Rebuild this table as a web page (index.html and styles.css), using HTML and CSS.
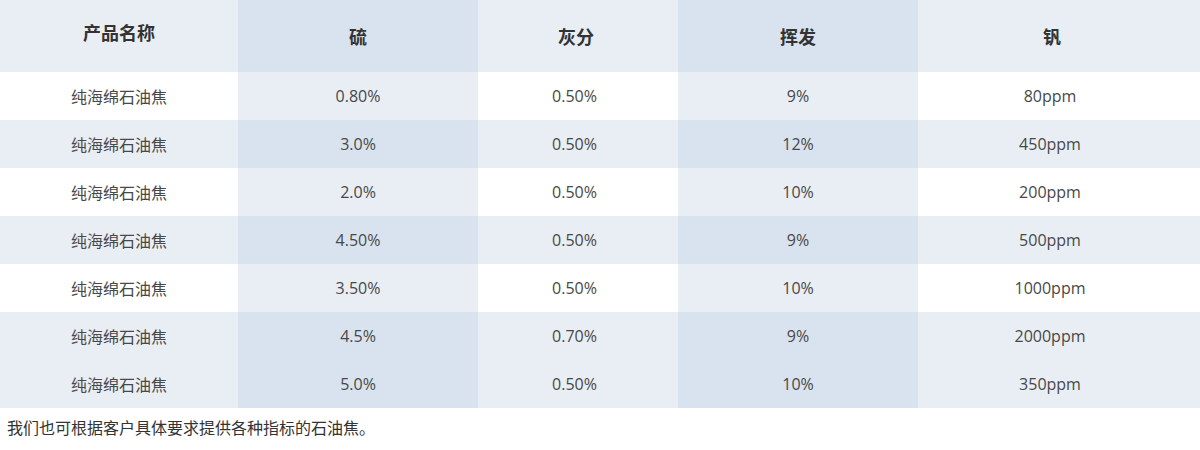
FILE: index.html
```html
<!DOCTYPE html>
<html lang="zh-CN">
<head>
<meta charset="utf-8">
<title>石油焦指标</title>
<link rel="stylesheet" href="styles.css">
</head>
<body>
<table class="spec">
  <colgroup>
    <col class="c1"><col class="c2"><col class="c3"><col class="c4"><col class="c5">
  </colgroup>
  <thead>
    <tr>
      <th class="first">产品名称</th><th>硫</th><th>灰分</th><th>挥发</th><th>钒</th>
    </tr>
  </thead>
  <tbody>
    <tr class="odd"><td>纯海绵石油焦</td><td>0.80%</td><td>0.50%</td><td>9%</td><td>80ppm</td></tr>
    <tr class="even"><td>纯海绵石油焦</td><td>3.0%</td><td>0.50%</td><td>12%</td><td>450ppm</td></tr>
    <tr class="odd"><td>纯海绵石油焦</td><td>2.0%</td><td>0.50%</td><td>10%</td><td>200ppm</td></tr>
    <tr class="even"><td>纯海绵石油焦</td><td>4.50%</td><td>0.50%</td><td>9%</td><td>500ppm</td></tr>
    <tr class="odd"><td>纯海绵石油焦</td><td>3.50%</td><td>0.50%</td><td>10%</td><td>1000ppm</td></tr>
    <tr class="even"><td>纯海绵石油焦</td><td>4.5%</td><td>0.70%</td><td>9%</td><td>2000ppm</td></tr>
    <tr class="even"><td>纯海绵石油焦</td><td>5.0%</td><td>0.50%</td><td>10%</td><td>350ppm</td></tr>
  </tbody>
</table>
<p class="note">我们也可根据客户具体要求提供各种指标的石油焦。</p>
</body>
</html>
```
FILE: styles.css
```css
html, body {
  margin: 0;
  padding: 0;
  background: #ffffff;
  font-family: "Open Sans", "Noto Sans CJK SC", sans-serif;
  color: #444444;
}

.spec {
  width: 1200px;
  border-collapse: collapse;
  table-layout: fixed;
}

.c1 { width: 238px; }
.c2 { width: 240px; }
.c3 { width: 200px; }
.c4 { width: 240px; }
.c5 { width: 282px; }

.spec th {
  height: 72px;
  padding: 0;
  box-sizing: border-box;
  font-size: 18px;
  font-weight: bold;
  color: #333333;
  text-align: center;
  vertical-align: middle;
  background: #e9eef5;
}

.spec th.first {
  padding: 0 0 8px 0;
}

.spec th:nth-child(2),
.spec th:nth-child(4) {
  background: #d9e3ef;
}

.spec td {
  height: 48px;
  padding: 0;
  font-size: 16px;
  text-align: center;
  vertical-align: middle;
  color: #484848;
}

.spec th:nth-child(3) { padding-right: 4px; }
.spec td:nth-child(3) { padding-right: 7px; }
.spec th:nth-child(5) { padding-right: 14px; }
.spec td:nth-child(5) { padding-right: 18px; }

.spec tr.odd td { background: #ffffff; }
.spec tr.odd td:nth-child(2),
.spec tr.odd td:nth-child(4) { background: #e9eef5; }

.spec tr.even td { background: #e9eef5; }
.spec tr.even td:nth-child(2),
.spec tr.even td:nth-child(4) { background: #d9e3ef; }

.note {
  margin: 8px 0 0 0;
  padding-left: 7px;
  font-size: 16px;
  line-height: 24px;
  color: #333333;
}
```
